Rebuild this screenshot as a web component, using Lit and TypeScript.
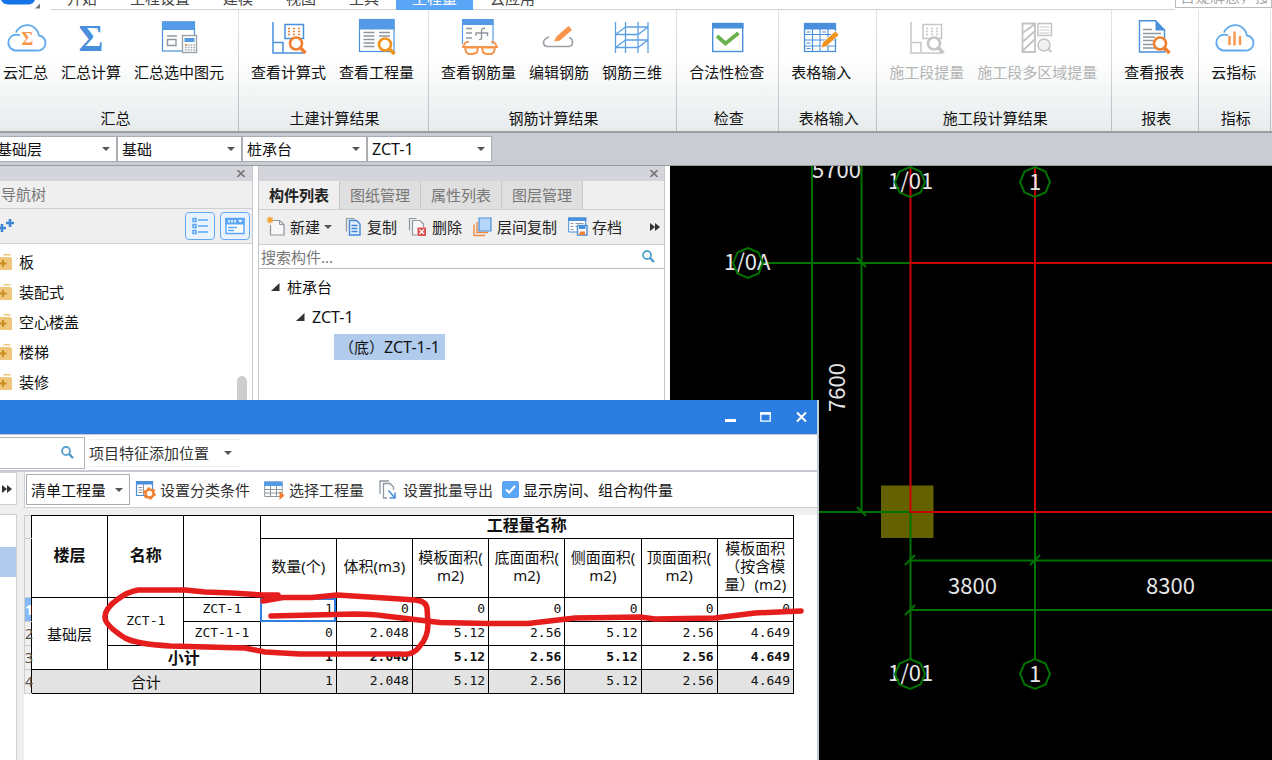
import { LitElement, html, svg, css, nothing } from "lit";
import { customElement, property } from "lit/decorators.js";
import { classMap } from "lit/directives/class-map.js";

const base = css`
  * { box-sizing: border-box; }
  button, input, select {
    font: inherit; color: inherit; margin: 0; padding: 0;
    border: 0; background: none; border-radius: 0; outline: none;
  }
  button { cursor: pointer; white-space: nowrap; }
  svg { display: block; flex: none; }
`;

/* ---------- icons ---------- */

const magnifier = (x: number, y: number, c: string) => svg`
  <circle cx=${x} cy=${y} r="6" fill="#fff" stroke=${c} stroke-width="2.6"/>
  <path d="M${x + 4.5} ${y + 4.5}l5 5" stroke=${c} stroke-width="3.6"/>`;

const cloud = svg`<path d="M14 15.500A8 8 0 1 0 9 30.500H31A7.500 7.500 0 0 0 33 15.500A12 12 0 0 0 10 12.500" fill="none" stroke="#5fa9ee" stroke-width="1.8"/>`;

const section = (c: string, lens: string, dots: string) => svg`
  <path d="M4 2V33H36M4 22.500H14V33" fill="none" stroke=${c} stroke-width="1.5"/>
  <rect x="16" y="4.500" width="18.500" height="14" fill="#fff" stroke=${c} stroke-width="1.5"/>
  <path d="M19 8.500h13M19 11.500h13M19 14.500h13" stroke=${dots} stroke-width="1.6" stroke-dasharray="2 3"/>
  ${magnifier(27, 23.5, lens)}`;

const icons: Record<string, unknown> = {
  cloudSum: svg`${cloud}<text x="21.500" y="25" text-anchor="middle" font-family="Liberation Serif" font-weight="700" font-size="18" fill="#f7954a">Σ</text>`,
  sum: svg`<text x="20" y="31" text-anchor="middle" font-family="Liberation Serif" font-weight="700" font-size="38" fill="#4a8fdb">Σ</text>`,
  sumPick: svg`
    <rect x="3.500" y="2" width="32" height="29" fill="#fff" stroke="#4a8fdb" stroke-width="1.2"/>
    <path d="M3 1.500h33v8.500H3z" fill="#559ae6"/>
    <path d="M8 16h10M8.500 19.500h8.500v6H8.500z" fill="none" stroke="#8f979e" stroke-width="1.4"/>
    <rect x="23.500" y="15.500" width="14" height="17" fill="#fff" stroke="#9aa1a7" stroke-width="1.4"/>
    <path d="M25.500 18h10v4h-10z" fill="#559ae6"/>
    <path d="M26 25h10M26 27.500h10M26 30h10" stroke="#a3a9ae" stroke-width="1.4" stroke-dasharray="1.600 1.200"/>
    <path d="M26 25h2" stroke="#f08030" stroke-width="1.4"/>`,
  formula: section("#4a8fdb", "#f08030", "#f08030"),
  viewQty: svg`
    <rect x="2.500" y="-.5" width="34.500" height="32" fill="#fff" stroke="#4a8fdb" stroke-width="1.2"/>
    <path d="M2-1h35.500V9.500H2z" fill="#559ae6"/>
    <path d="M6.500 12.500h11M22 12.500h11M6.500 16h11M22 16h11M6.500 19.500h11M6.500 23h11M6.500 26.500h11" stroke="#8f979e" stroke-width="1.3"/>
    ${magnifier(28, 24.5, "#f0921e")}`,
  rebarQty: svg`
    <path d="M3.500 24V-.5h30.500V24" fill="#fff" stroke="#559ae6" stroke-width="1.2"/>
    <path d="M3-1h31.500V5H3z" fill="#559ae6"/>
    <path d="M7 8.500h6M7 13h6M7 18h6" stroke="#8f979e" stroke-width="1.3"/>
    <path d="M26 8.500q-3.500-1-3.500 2.500v7q0 2-2.500 1.500M17 16v-3h11.500v3" fill="none" stroke="#8f979e" stroke-width="1.4"/>
    <path d="M10 22q-4-1-5.500 4M32 22q4-1 5.500 4M3 27h36" fill="none" stroke="#f7954a" stroke-width="1.8"/>
    <path d="M6 27.500h13l-1 5-4 1.500H9.500L7 32zM23 27.500h13L35 32l-2.500 2H27l-3-1.500z" fill="#fff" stroke="#f7954a" stroke-width="2"/>`,
  rebarEdit: svg`
    <path d="M10 17q-6 2-5.500 6.500 1 3 4 3h21q4 0 4-4t-3.500-5" fill="none" stroke="#9aa1a7" stroke-width="1.6"/>
    <path d="M15 21.500l2.500-5L29.500 6l3.500 4-12 10.500z" fill="#f7954a"/>`,
  rebar3d: svg`<path d="M3.500 2v31M13.500 2v31M26 2v31M36 2v31M13.500 7H36M3.500 14.500H26L36 7M3.500 14.500l10-7.500M13.500 20H36M3.500 27.500H26L36 20M3.500 27.500l10-7.500" fill="none" stroke="#5c9fe2" stroke-width="1.3"/>`,
  check: svg`
    <rect x="5.700" y="3.500" width="30" height="28" fill="#fff" stroke="#4a8fdb" stroke-width="1.4"/>
    <path d="M5 3h31.500v5.500H5z" fill="#4a8fdb"/>
    <path d="M10 16l8.500 7.500L31.500 13" fill="none" stroke="#6bb14f" stroke-width="3.800"/>`,
  tableIn: svg`
    <rect x="3.500" y="3.500" width="31" height="28" fill="#fff" stroke="#4a8fdb" stroke-width="1.3"/>
    <path d="M3 3h32v6.500H3z" fill="#4a8fdb"/>
    <path d="M4 14.500h30M4 20h30M4 26h30M11.500 9v22M19 9v22M27 9v22" stroke="#4a8fdb" stroke-width="1.1"/>
    <path d="M5.500 12h4M5.500 23h4M5.500 28.500h4M21 12h4" stroke="#4a8fdb" stroke-width="1.2"/>
    <path d="M19.500 28l2.500-6L34.500 11l3.500 4-12.500 11.500z" fill="#f0921e" stroke="#fff" stroke-width=".8"/>`,
  stageQty: section("#c6c6c6", "#c6c6c6", "#c6c6c6"),
  stageMulti: svg`
    <path d="M5.500 3.500h12.500v28.500H5.500zM5.500 13l12.500-9M5.500 22l12.500-11M5.500 31l12.500-12" fill="none" stroke="#c3c3c3" stroke-width="1.8"/>
    <rect x="21" y="3.500" width="13.500" height="12" fill="#fff" stroke="#c3c3c3" stroke-width="1.500"/>
    <path d="M22.500 7h10M22.500 10h10M22.500 13h10" stroke="#c9c9c9"/>
    <circle cx="27" cy="25" r="6" fill="#f1f1f1" stroke="#c3c3c3" stroke-width="1.500"/><path d="M31 29l3.500 3" stroke="#c3c3c3" stroke-width="1.800"/>`,
  report: svg`
    <path d="M5.500 .7H21.500L30.500 10V32H5.500z" fill="#fff" stroke="#4a8fdb" stroke-width="1.400"/>
    <path d="M21.500 0L31.500 10.500H21.500z" fill="#4a8fdb"/>
    <path d="M9 9.500h9M9 13.500h18M9 17h12M9 20.500h10M9 24.500h10M9 28h12" stroke="#8f979e" stroke-width="1.300"/>
    ${magnifier(26, 23.5, "#f08030")}`,
  cloudIdx: svg`${cloud}<path d="M15.500 16v9M20.500 11.500v14M26 16v9" stroke="#f7954a" stroke-width="2.400"/>`,
};

const ribbonIcon = (name: string) =>
  html`<svg width="40" height="36" viewBox="0 0 40 36" overflow="visible" aria-hidden="true">${icons[name]}</svg>`;

const small: Record<string, unknown> = {
  create: svg`<path d="M5 3.500h8.500l4.500 4V18H4.500V8" fill="#f8f8f8" stroke="#8f979e" stroke-width="1.200"/><path d="M13.500 3.500v4H18" fill="none" stroke="#8f979e"/><path d="M4-.5v7M.5 3h7M1.500 .5l5 5M6.500 .5l-5 5" stroke="#f5a12d" stroke-width="1.200"/>`,
  copy: svg`<path d="M3.500 14.500V1.500h8" fill="none" stroke="#8f979e" stroke-width="1.200"/><path d="M6.500 3.500h7l3.500 3.500v11H6.500z" fill="#e6f1fd" stroke="#3f86d6" stroke-width="1.400"/><path d="M8.500 8.500h6M8.500 11.500h6M8.500 14.500h6" stroke="#3f86d6" stroke-width="1.300"/>`,
  remove: svg`<path d="M1.500 13.500V1.500h7" fill="none" stroke="#8f979e" stroke-width="1.200"/><path d="M9 18H4.500V3.500H12L15.500 7v3" fill="#f8f8f8" stroke="#8f979e" stroke-width="1.200"/><path d="M9.500 10.500h8.500V19H9.500z" fill="#dc5151"/><path d="M11.500 12.500l4.500 4.500M16 12.500l-4.500 4.500" stroke="#fff" stroke-width="1.200"/>`,
  layers: svg`<path d="M1 7.500v11h11M4 5v10.500h11" fill="none" stroke="#ee8a43" stroke-width="1.400"/><path d="M6 1h12v13H6z" fill="#b5d6fa" stroke="#4a8fdb" stroke-width="1.200"/>`,
  archive: svg`<path d="M.7 1h17v14H.7z" fill="#fff" stroke="#4a8fdb"/><path d="M0 .5h18.500V4H0z" fill="#4a8fdb"/><path d="M2.500 6.500h3M7.500 6.500h8M2.500 9.500h3M7.500 9.500h3M2.500 12.500h3" stroke="#8f979e"/><path d="M9.500 8.500H19V18H9.500z" fill="#fff" stroke="#4a8fdb" stroke-width="1.400"/><path d="M11 9h6.500v3H11z" fill="#4a8fdb"/><path d="M11.500 14.500H17V18h-5.500z" fill="#f08030"/>`,
  classify: svg`<path d="M1.500 1.500h16v14h-16z" fill="#fff" stroke="#4a8fdb" stroke-width="1.200"/><path d="M1 1h17v3.500H1z" fill="#4a8fdb"/><path d="M3.500 7.500h4M3.500 10h4M3.500 12.500h4M8.500 4v11" stroke="#8f979e"/><circle cx="14.500" cy="13.500" r="4" fill="#fff" stroke="#f08030" stroke-width="2.600"/><circle cx="14.500" cy="13.500" r="5.500" fill="none" stroke="#f08030" stroke-width="1.600" stroke-dasharray="2.500 3.260"/>`,
  choose: svg`<path d="M.7 2h17.500v14.500H.7z" fill="#fff" stroke="#8f979e"/><path d="M0 1.500h18.500V6H0z" fill="#559ae6"/><path d="M1 9.500h17M1 13h17M6.500 6v10M12.500 6v10" stroke="#8f979e"/><path d="M15.500 11l5 4.500-5 4.500z" fill="#f08030"/>`,
  batch: svg`<path d="M2 14V1h9M9 18H5.500V3.500H12L15.500 7v3" fill="none" stroke="#8f979e" stroke-width="1.300"/><path d="M10.500 10.500l6 7M17 12.500V18h-5.500" fill="none" stroke="#4a8fdb" stroke-width="1.600"/>`,
};
const smallIcon = (name: string) =>
  html`<svg width="20" height="20" viewBox="0 0 20 20" overflow="visible" aria-hidden="true">${small[name]}</svg>`;

const caret = html`<svg class="caret" width="8" height="4" viewBox="0 0 8 4" aria-hidden="true"><path d="M0 0h8L4 4z" fill="#555"/></svg>`;
const more = html`<svg width="10" height="8" viewBox="0 0 10 8" aria-hidden="true"><path d="M0 0l5 4-5 4zM5 0l5 4-5 4z" fill="#333"/></svg>`;
const lens = html`<svg width="13" height="13" viewBox="0 0 13 13" aria-hidden="true"><circle cx="5" cy="5" r="4" fill="none" stroke="#58a3cf" stroke-width="1.800"/><path d="M8 8l4 4" stroke="#4a9acb" stroke-width="2.400"/></svg>`;
const cross = html`<svg width="8" height="7" viewBox="0 0 8 7" aria-hidden="true"><path d="M.5 0L7.500 7M7.500 0L.5 7" stroke="#777" stroke-width="1.600"/></svg>`;

/* ---------- drop-down ---------- */

@customElement("drop-down")
export class DropDown extends LitElement {
  static styles = [base, css`
    :host { display: grid; background: #fff; border: 1px solid #a9adb2; height: 27px; }
    select { grid-area: 1 / 1; appearance: none; padding: 0 24px 0 4px; width: 100%; line-height: 20px; }
    .caret { grid-area: 1 / 1; justify-self: end; align-self: center; margin-right: 6px; pointer-events: none; }
  `];
  @property() label = "";
  @property() value = "";
  render() {
    return html`<select aria-label=${this.label}><option>${this.value}</option></select>${caret}`;
  }
}

/* ---------- ribbon ---------- */

type Cmd = { icon: string; text: string; off?: boolean };
const groups: { title: string; cmds: Cmd[] }[] = [
  { title: "汇总", cmds: [{ icon: "cloudSum", text: "云汇总" }, { icon: "sum", text: "汇总计算" }, { icon: "sumPick", text: "汇总选中图元" }] },
  { title: "土建计算结果", cmds: [{ icon: "formula", text: "查看计算式" }, { icon: "viewQty", text: "查看工程量" }] },
  { title: "钢筋计算结果", cmds: [{ icon: "rebarQty", text: "查看钢筋量" }, { icon: "rebarEdit", text: "编辑钢筋" }, { icon: "rebar3d", text: "钢筋三维" }] },
  { title: "检查", cmds: [{ icon: "check", text: "合法性检查" }] },
  { title: "表格输入", cmds: [{ icon: "tableIn", text: "表格输入" }] },
  { title: "施工段计算结果", cmds: [{ icon: "stageQty", text: "施工段提量", off: true }, { icon: "stageMulti", text: "施工段多区域提量", off: true }] },
  { title: "报表", cmds: [{ icon: "report", text: "查看报表" }] },
  { title: "指标", cmds: [{ icon: "cloudIdx", text: "云指标" }] },
];
const tabs = ["开始", "工程设置", "建模", "视图", "工具", "工程量", "云应用"];

@customElement("app-ribbon")
export class AppRibbon extends LitElement {
  static styles = [base, css`
    :host { display: block; flex: none; overflow: hidden; }
    .top { display: flex; align-items: flex-end; height: 10px; overflow: hidden; background: #fff; }
    .brand { display: flex; width: 51px; align-self: stretch; }
    nav { display: flex; gap: 1px; flex: 1; align-self: stretch; align-items: flex-end; border-bottom: 1px solid #d3d3d3; }
    .tab { padding: 0 16px 2px; line-height: 20px; color: #444; text-decoration: none; margin-bottom: -1px; }
    .tab.on { background: #5aa5f5; color: #fff; }
    .ask { width: 97px; height: 24px; border: 1px solid #bbb; padding: 0 4px; line-height: 20px; margin-bottom: 2px; }
    .ask::placeholder { color: #aaa; opacity: 1; }
    .bar {
      display: flex; margin-left: -9px; border-bottom: 2px solid #999fa5;
      background: linear-gradient(#fff 40%, #e7ebec); color: #111;
    }
    .group { display: flex; flex-direction: column; padding: 10px 8px 3px 6px; min-width: 98px;
      border-right: 1px solid; border-image: linear-gradient(#e6e6e6, #b9bdc0) 1; }
    .group.tight { min-width: 0; }
    .cmds { display: flex; gap: 1px; flex: 1; }
    .cmd { display: flex; flex-direction: column; align-items: center; gap: 6px; padding: 0 6px; line-height: 20px; }
    .cmd svg { margin: 0 -6px; }
    .cmd:disabled { color: #b4b4b4; }
    .title { text-align: center; line-height: 20px; margin-top: 26px; padding-left: 4px; }
  `];
  render() {
    return html`
      <div class="top">
        <div class="brand"><svg width="44" height="10" viewBox="0 0 44 10" aria-hidden="true">
          <path d="M1 0H35Q33 4.500 28 4.500H9Q3 4.500 1 0z" fill="#1473e6"/><path d="M40 3.500V8.500H35z" fill="#777"/></svg></div>
        <nav>${tabs.map((t) => html`<a class=${classMap({ tab: true, on: t === "工程量" })} href="#">${t}</a>`)}</nav>
        <input class="ask" aria-label="搜索" placeholder="百疑解惑，搜这里">
      </div>
      <div class="bar">
        ${groups.map((g) => html`
          <section class=${classMap({ group: true, tight: g.title !== "表格输入" })}>
            <div class="cmds">${g.cmds.map((c) => html`
              <button class="cmd" ?disabled=${c.off}>${ribbonIcon(c.icon)}<span>${c.text}</span></button>`)}
            </div>
            <div class="title">${g.title}</div>
          </section>`)}
      </div>`;
  }
}

/* ---------- navigation tree ---------- */

@customElement("nav-panel")
export class NavPanel extends LitElement {
  static styles = [base, css`
    :host { display: flex; flex-direction: column; flex: none; width: 253px; border-right: 1px solid #c3c7cb; background: #fff; }
    .grip { display: flex; justify-content: flex-end; align-items: center; height: 15px; padding-right: 7px; background: #d3d5da; }
    .title { height: 28px; line-height: 27px; padding-left: 1px; background: #efefef; color: #777; border-bottom: 1px solid #cdd0d4; }
    .tools { display: flex; align-items: center; gap: 5px; height: 35px; padding-right: 2px; background: #efefef; border-bottom: 1px solid #cdd0d4; }
    .tools .add { margin-right: auto; }
    .mode { display: grid; place-items: center; width: 30px; height: 28px; border: 1px solid #64a7f3; border-radius: 4px; background: #e9f3fe; }
    .body { display: flex; flex: 1; }
    ul { flex: 1; margin: 0; padding: 3px 0 0; list-style: none; }
    li { display: flex; align-items: center; gap: 7px; height: 30px; line-height: 20px; color: #111; }
    .thumb { width: 10px; margin: 132px 5px 0 0; background: #cdcdcd; border-radius: 5px 5px 0 0; }
  `];
  render() {
    return html`
      <div class="grip"><button aria-label="关闭">${cross}</button></div>
      <div class="title">导航树</div>
      <div class="tools">
        <button class="add" aria-label="添加"><svg width="14" height="14" viewBox="0 0 14 14"><path d="M10 0v8M6 4h8M2 5v8M-2 9h8" stroke="#3f86d6" stroke-width="2.600"/></svg></button>
        <button class="mode" aria-label="列表"><svg width="16" height="18" viewBox="0 0 16 18"><path d="M1 1.500h3v3H1zM1 7.500h3v3H1zM1 13.500h3v3H1zM6 3h10M6 9h10M6 15h10" fill="none" stroke="#5aa5f5" stroke-width="1.500"/></svg></button>
        <button class="mode" aria-label="面板"><svg width="20" height="18" viewBox="0 0 20 18"><rect x="1" y="1.500" width="18" height="15" fill="#fff" stroke="#5aa5f5" stroke-width="1.500"/><path d="M.5 1h19v6.500H.5z" fill="#5aa5f5"/><path d="M4 3v2.500M7 3v2.500M10 3v2.500" stroke="#fff" stroke-width="1.500"/><path d="M13 3h4.500l-2.200 2.500z" fill="#fff"/><path d="M3 10.500h9M3 13.500h6" stroke="#5aa5f5" stroke-width="1.300"/></svg></button>
      </div>
      <div class="body">
        <ul>${["板", "装配式", "空心楼盖", "楼梯", "装修"].map((t) => html`
          <li><svg width="12" height="16" viewBox="0 0 12 16" aria-hidden="true"><path d="M3 1.500Q3 0 5 0h5l1 1.500zM-2 3h12.500L12 4.500V16H-2z" fill="#efc77c"/><path d="M3 6v7M-.5 9.500h7" stroke="#c98c1e" stroke-width="2"/></svg>${t}</li>`)}
        </ul>
        <div class="thumb"></div>
      </div>`;
  }
}

/* ---------- component list ---------- */

@customElement("component-panel")
export class ComponentPanel extends LitElement {
  static styles = [base, css`
    :host { display: flex; flex-direction: column; flex: none; width: 407px; background: #fff; border: solid #c3c7cb; border-width: 0 1px; }
    .grip { display: flex; justify-content: flex-end; align-items: center; height: 15px; padding-right: 6px; background: #d3d5da; }
    .tabs { display: flex; height: 29px; background: #efefef; border-bottom: 1px solid #cdd0d4; }
    .tabs button { padding: 0 10px; line-height: 28px; background: #dfdfdf; color: #777; border-right: 1px solid #c6c9cd; }
    .tabs .on { background: #efefef; color: #222; font-weight: 700; }
    .tools { display: flex; align-items: center; gap: 11px; height: 35px; padding: 0 4px 0 7px; background: #efefef; border-bottom: 1px solid #cdd0d4; color: #222; }
    .tool { display: flex; align-items: center; gap: 4px; line-height: 20px; }
    .more { margin-left: auto; }
    .find { display: flex; align-items: center; height: 24px; padding: 0 9px 0 2px; border-bottom: 1px solid #b9bdc1; }
    .find input { flex: 1; min-width: 0; }
    .find input::placeholder { color: #777; opacity: 1; }
    ul { margin: 0; padding: 0; list-style: none; }
    .tree { padding-top: 3px; }
    .row { display: flex; align-items: center; gap: 7px; height: 30px; line-height: 26px; color: #111; }
    .l1 { padding-left: 12px; } .l2 { padding-left: 37px; } .l3 { padding-left: 75px; }
    .code { font-size: 16px; }
    .pick { display: flex; height: 26px; background: #b0cbec; padding: 0 5px; }
  `];
  render() {
    const node = html`<svg width="9" height="8" viewBox="0 0 9 8" aria-hidden="true"><path d="M8.500 0V8H0z" fill="#333"/></svg>`;
    const tools: [string, string][] = [["create", "新建"], ["copy", "复制"], ["remove", "删除"], ["layers", "层间复制"], ["archive", "存档"]];
    return html`
      <div class="grip"><button aria-label="关闭">${cross}</button></div>
      <div class="tabs">${["构件列表", "图纸管理", "属性列表", "图层管理"].map((t, i) => html`<button class=${i ? "" : "on"}>${t}</button>`)}</div>
      <div class="tools">
        ${tools.map(([i, t]) => html`<button class="tool">${smallIcon(i)}${t}${i === "create" ? caret : nothing}</button>`)}
        <button class="more" aria-label="更多">${more}</button>
      </div>
      <div class="find"><input aria-label="搜索构件" placeholder="搜索构件...">${lens}</div>
      <ul class="tree">
        <li><div class="row l1">${node}桩承台</div>
          <ul><li><div class="row l2">${node}<span class="code">ZCT-1</span></div>
            <ul><li class="row l3"><span class="pick">（底）<span class="code">ZCT-1-1</span></span></li></ul>
          </li></ul>
        </li>
      </ul>`;
  }
}

/* ---------- drawing ---------- */

@customElement("cad-view")
export class CadView extends LitElement {
  static styles = css`
    :host { display: block; flex: 1; min-width: 0; background: #000; overflow: hidden; }
    svg { display: block; width: 100%; height: 100%; }
    .g { stroke: #007200; stroke-width: 2; fill: none; }
    .r { stroke: #c80000; stroke-width: 2; fill: none; }
    .t { fill: #e6e6e6; font: 22px "Noto Sans CJK SC", sans-serif; }
  `;
  render() {
    const bubbles = [[910, 182], [1035, 182], [748, 263], [910, 674], [1035, 674]];
    const marks: [number, number, string][] = [[812, 178, "5700"], [888, 189, "1/01"], [1029, 190, "1"], [724, 270, "1/0A"], [948, 594, "3800"], [1146, 594, "8300"], [888, 681, "1/01"], [1029, 682, "1"]];
    return html`<svg role="img" aria-label="轴网"><g transform="translate(-670 -166)">
      <rect x="881" y="485.500" width="52.500" height="52.500" fill="#646200"/>
      <path class="g" d="M812 166V760M861.500 166V512M763 263H910M812 512H910M910.500 512V659M1035 512V659M910 560.500H4000M910 610H4000"/>
      <path class="r" d="M910.500 167V512H4000M1035 167V512M910 263H4000"/>
      <path class="g" d="M857 258l9 9M857 507l9 9M905 565l10-10M1030 565l10-10M905 615l10-10"/>
      ${marks.map(([x, y, s]) => svg`<text class="t" x=${x} y=${y}>${s}</text>`)}
      ${bubbles.map(([x, y]) => svg`<path class="g" d="M${x} ${y - 15}l10.500 4.500 4.500 10.500-4.500 10.500-10.500 4.500-10.500-4.500-4.500-10.500 4.500-10.500z"/>`)}
      <text class="t" transform="translate(845 412) rotate(-90)">7600</text>
    </g></svg>`;
  }
}

/* ---------- quantity window ---------- */

@customElement("quantity-window")
export class QuantityWindow extends LitElement {
  static styles = [base, css`
    :host { display: flex; flex-direction: column; background: #efefef; border-right: 2px solid #c3cbd6; overflow: hidden; }
    .bar { display: flex; justify-content: flex-end; align-items: center; gap: 24px; height: 34px; padding-right: 11px; margin-right: -2px; background: #2b7de1; }
    .filter { display: flex; align-items: center; height: 38px; gap: 4px; background: #fff; border: solid #c6cad0; border-width: 1px 0 2px; }
    .box { display: flex; align-items: center; width: 85px; height: 32px; padding-right: 10px; border: 1px solid #b4b4b4; border-left: 0; }
    .box input { flex: 1; min-width: 0; }
    .place { display: flex; align-items: center; gap: 15px; line-height: 26px; color: #333; padding-right: 8px; border: solid #f0f0f0; border-width: 1px 0; }
    .body { display: flex; gap: 7px; flex: 1; min-height: 0; }
    .side { display: flex; flex-direction: column; gap: 9px; width: 17px; }
    .side button { display: grid; place-items: center start; padding-left: 2px; height: 33px; background: #fff; border: solid #cdd0d4; border-width: 1px 1px 1px 0; }
    .list { flex: 1; padding-top: 32px; background: #fff; border: solid #cdd0d4; border-width: 1px 1px 0 0; }
    .picked { height: 30px; background: #b0cbec; }
    .main { display: flex; flex-direction: column; gap: 7px; flex: 1; min-width: 0; }
    .tools { display: flex; align-items: center; height: 36px; padding-left: 1px; background: #fff; border: solid #cdd0d4; border-width: 0 0 1px 1px; color: #333; }
    drop-down { width: 104px; height: 31px; margin-right: 5px; color: #111; }
    .tool { display: flex; align-items: center; gap: 5px; margin-right: 14px; line-height: 20px; }
    .tool.last { margin-right: 9px; }
    .opt { display: flex; align-items: center; gap: 4px; color: #111; }
    .opt input { appearance: none; width: 17px; height: 17px; border-radius: 2px; grid-area: 1 / 1; background: #fff; border: 1px solid #5aa5f5; }
    .opt input:checked { background: #5aa5f5; }
    .tick { display: grid; place-items: center; }
    .tick svg { grid-area: 1 / 1; pointer-events: none; }
    .sheet { flex: 1; background: #fff; min-height: 0; overflow: hidden; }
    table { table-layout: fixed; width: 770px; border-collapse: collapse; color: #111; }
    td, th { border: 1px solid #000; padding: 0; text-align: center; font-weight: 400; line-height: 18px; height: 24px; }
    th { padding-bottom: 4px; }
    .h1 td, .h1 th { height: 23px; }
    .h2 th { height: 59px; }
    .num, .code { font: 13px/17px "DejaVu Sans Mono", monospace; padding-bottom: 2px; }
    .num { text-align: right; padding-right: 3px; }
    th.big, .sub td { font-weight: 700; }
    .big { font-size: 16px; }
    .total td { background: #e3e3e3; }
    td.no, .total td.no { border-color: #cdcdcd; border-right-color: #000; background: #efefef; color: #555; text-align: left; font: 14px/17px "Noto Sans", sans-serif; }
    td.no.cur { background: #85b8f7; color: #fff; font-weight: 700; }
    .sel { outline: 2px solid #2f80e0; outline-offset: -2px; }
    .ink { position: absolute; left: 0; top: 0; pointer-events: none; }
  `];
  render() {
    const heads = [["模板面积(", "m2)"], ["底面面积(", "m2)"], ["侧面面积(", "m2)"], ["顶面面积(", "m2)"]];
    const q = ["5.12", "2.56", "5.12", "2.56", "4.649"];
    const cells = (v: string[], sel = false) => v.map((s, i) => html`<td class=${classMap({ num: true, sel: sel && i === 0 })}>${s}</td>`);
    return html`
      <div class="bar">
        <button aria-label="最小化"><svg width="11" height="12" viewBox="0 0 11 12"><path d="M0 9.500h11" stroke="#fff" stroke-width="3"/></svg></button>
        <button aria-label="最大化"><svg width="11" height="12" viewBox="0 0 11 12"><path d="M.8 2h9.400v8.200H.8z" fill="none" stroke="#fff" stroke-width="1.300"/><path d="M0 2.500h11" stroke="#fff" stroke-width="2.500"/></svg></button>
        <button aria-label="关闭"><svg width="13" height="12" viewBox="0 0 13 12"><path d="M2 1.500l9 9M11 1.500l-9 9" stroke="#fff" stroke-width="2"/></svg></button>
      </div>
      <div class="filter">
        <div class="box"><input aria-label="搜索">${lens}</div>
        <button class="place">项目特征添加位置${caret}</button>
      </div>
      <div class="body">
        <div class="side"><button aria-label="展开">${more}</button><div class="list"><div class="picked"></div></div></div>
        <div class="main">
          <div class="tools">
            <drop-down label="工程量类型" value="清单工程量"></drop-down>
            <button class="tool">${smallIcon("classify")}设置分类条件</button>
            <button class="tool">${smallIcon("choose")}选择工程量</button>
            <button class="tool last">${smallIcon("batch")}设置批量导出</button>
            <label class="opt"><span class="tick"><input type="checkbox" checked><svg width="11" height="9" viewBox="0 0 11 9"><path d="M1 4.500L4.200 7.500 10 1" fill="none" stroke="#fff" stroke-width="2.200"/></svg></span>显示房间、组合构件量</label>
          </div>
          <div class="sheet">
            <table>
              <colgroup><col style="width:7px">${Array.from({ length: 10 }, () => html`<col>`)}</colgroup>
              <tr class="h1"><td class="no"></td><th class="big" rowspan="2">楼层</th><th class="big" rowspan="2">名称</th><th rowspan="2"></th><th class="big" colspan="7">工程量名称</th></tr>
              <tr class="h2"><td class="no"></td><th>数量(个)</th><th>体积(m3)</th>
                ${heads.map(([a, b]) => html`<th>${a}<br>${b}</th>`)}<th>模板面积<br>（按含模<br>量）(m2)</th></tr>
              <tr><td class="no cur">1</td><td rowspan="3">基础层</td><td class="code" rowspan="2">ZCT-1</td><td class="code">ZCT-1</td>${cells(["1", "0", "0", "0", "0", "0", "0"], true)}</tr>
              <tr><td class="no">2</td><td class="code">ZCT-1-1</td>${cells(["0", "2.048", ...q])}</tr>
              <tr class="sub"><td class="no">3</td><td class="big" colspan="2">小计</td>${cells(["1", "2.048", ...q])}</tr>
              <tr class="total"><td class="no">4</td><td colspan="3">合计</td>${cells(["1", "2.048", ...q])}</tr>
            </table>
          </div>
        </div>
      </div>
      <svg class="ink" width="819" height="360" viewBox="0 400 819 360" fill="none" stroke="#e61d1d" stroke-width="5.500" stroke-linecap="round" stroke-linejoin="round" aria-hidden="true">
        <path d="M278 595L262 595L232 593L205 592L185 590H138Q127 592 118 599Q104 609 105 618Q106 626 125 638Q136 644 170 646L245 648L265 652L300 654H400Q413 656 420 646Q428 637 428 624L427 608Q426 601 415 600L385 598L337 595L312 597.500L283 597.500L263 601"/>
        <path d="M271 616L355 614Q372 614 385 616L440 622.500L487 623.500H528Q550 621 575 618L640 617L655 619L715 618L755 613L801 611"/>
      </svg>`;
  }
}

/* ---------- page ---------- */

@customElement("app-root")
export class AppRoot extends LitElement {
  static styles = [base, css`
    :host {
      display: flex; flex-direction: column; position: relative; height: 100vh; overflow: hidden; background: #fff;
      font: 15px/20px "Noto Sans", "Noto Sans CJK SC", sans-serif;
    }
    .combos { display: flex; flex: none; align-items: center; height: 33px; margin-left: -8px; background: #c9cdd3; border-bottom: 1px solid #979ca1; color: #111; }
    .combos drop-down { width: 125px; height: 26px; }
    .combos drop-down:last-child { font-size: 16px; }
    main { display: flex; flex: 1; min-height: 0; gap: 5px; }
    quantity-window { position: absolute; left: 0; top: 400px; bottom: 0; width: 819px; }
  `];
  render() {
    const combos = [["楼层", "基础层"], ["分类", "基础"], ["构件类型", "桩承台"], ["构件", "ZCT-1"]];
    return html`
      <app-ribbon></app-ribbon>
      <div class="combos">${combos.map(([l, v]) => html`<drop-down label=${l} value=${v}></drop-down>`)}</div>
      <main><nav-panel></nav-panel><component-panel></component-panel><cad-view></cad-view></main>
      <quantity-window></quantity-window>`;
  }
}
